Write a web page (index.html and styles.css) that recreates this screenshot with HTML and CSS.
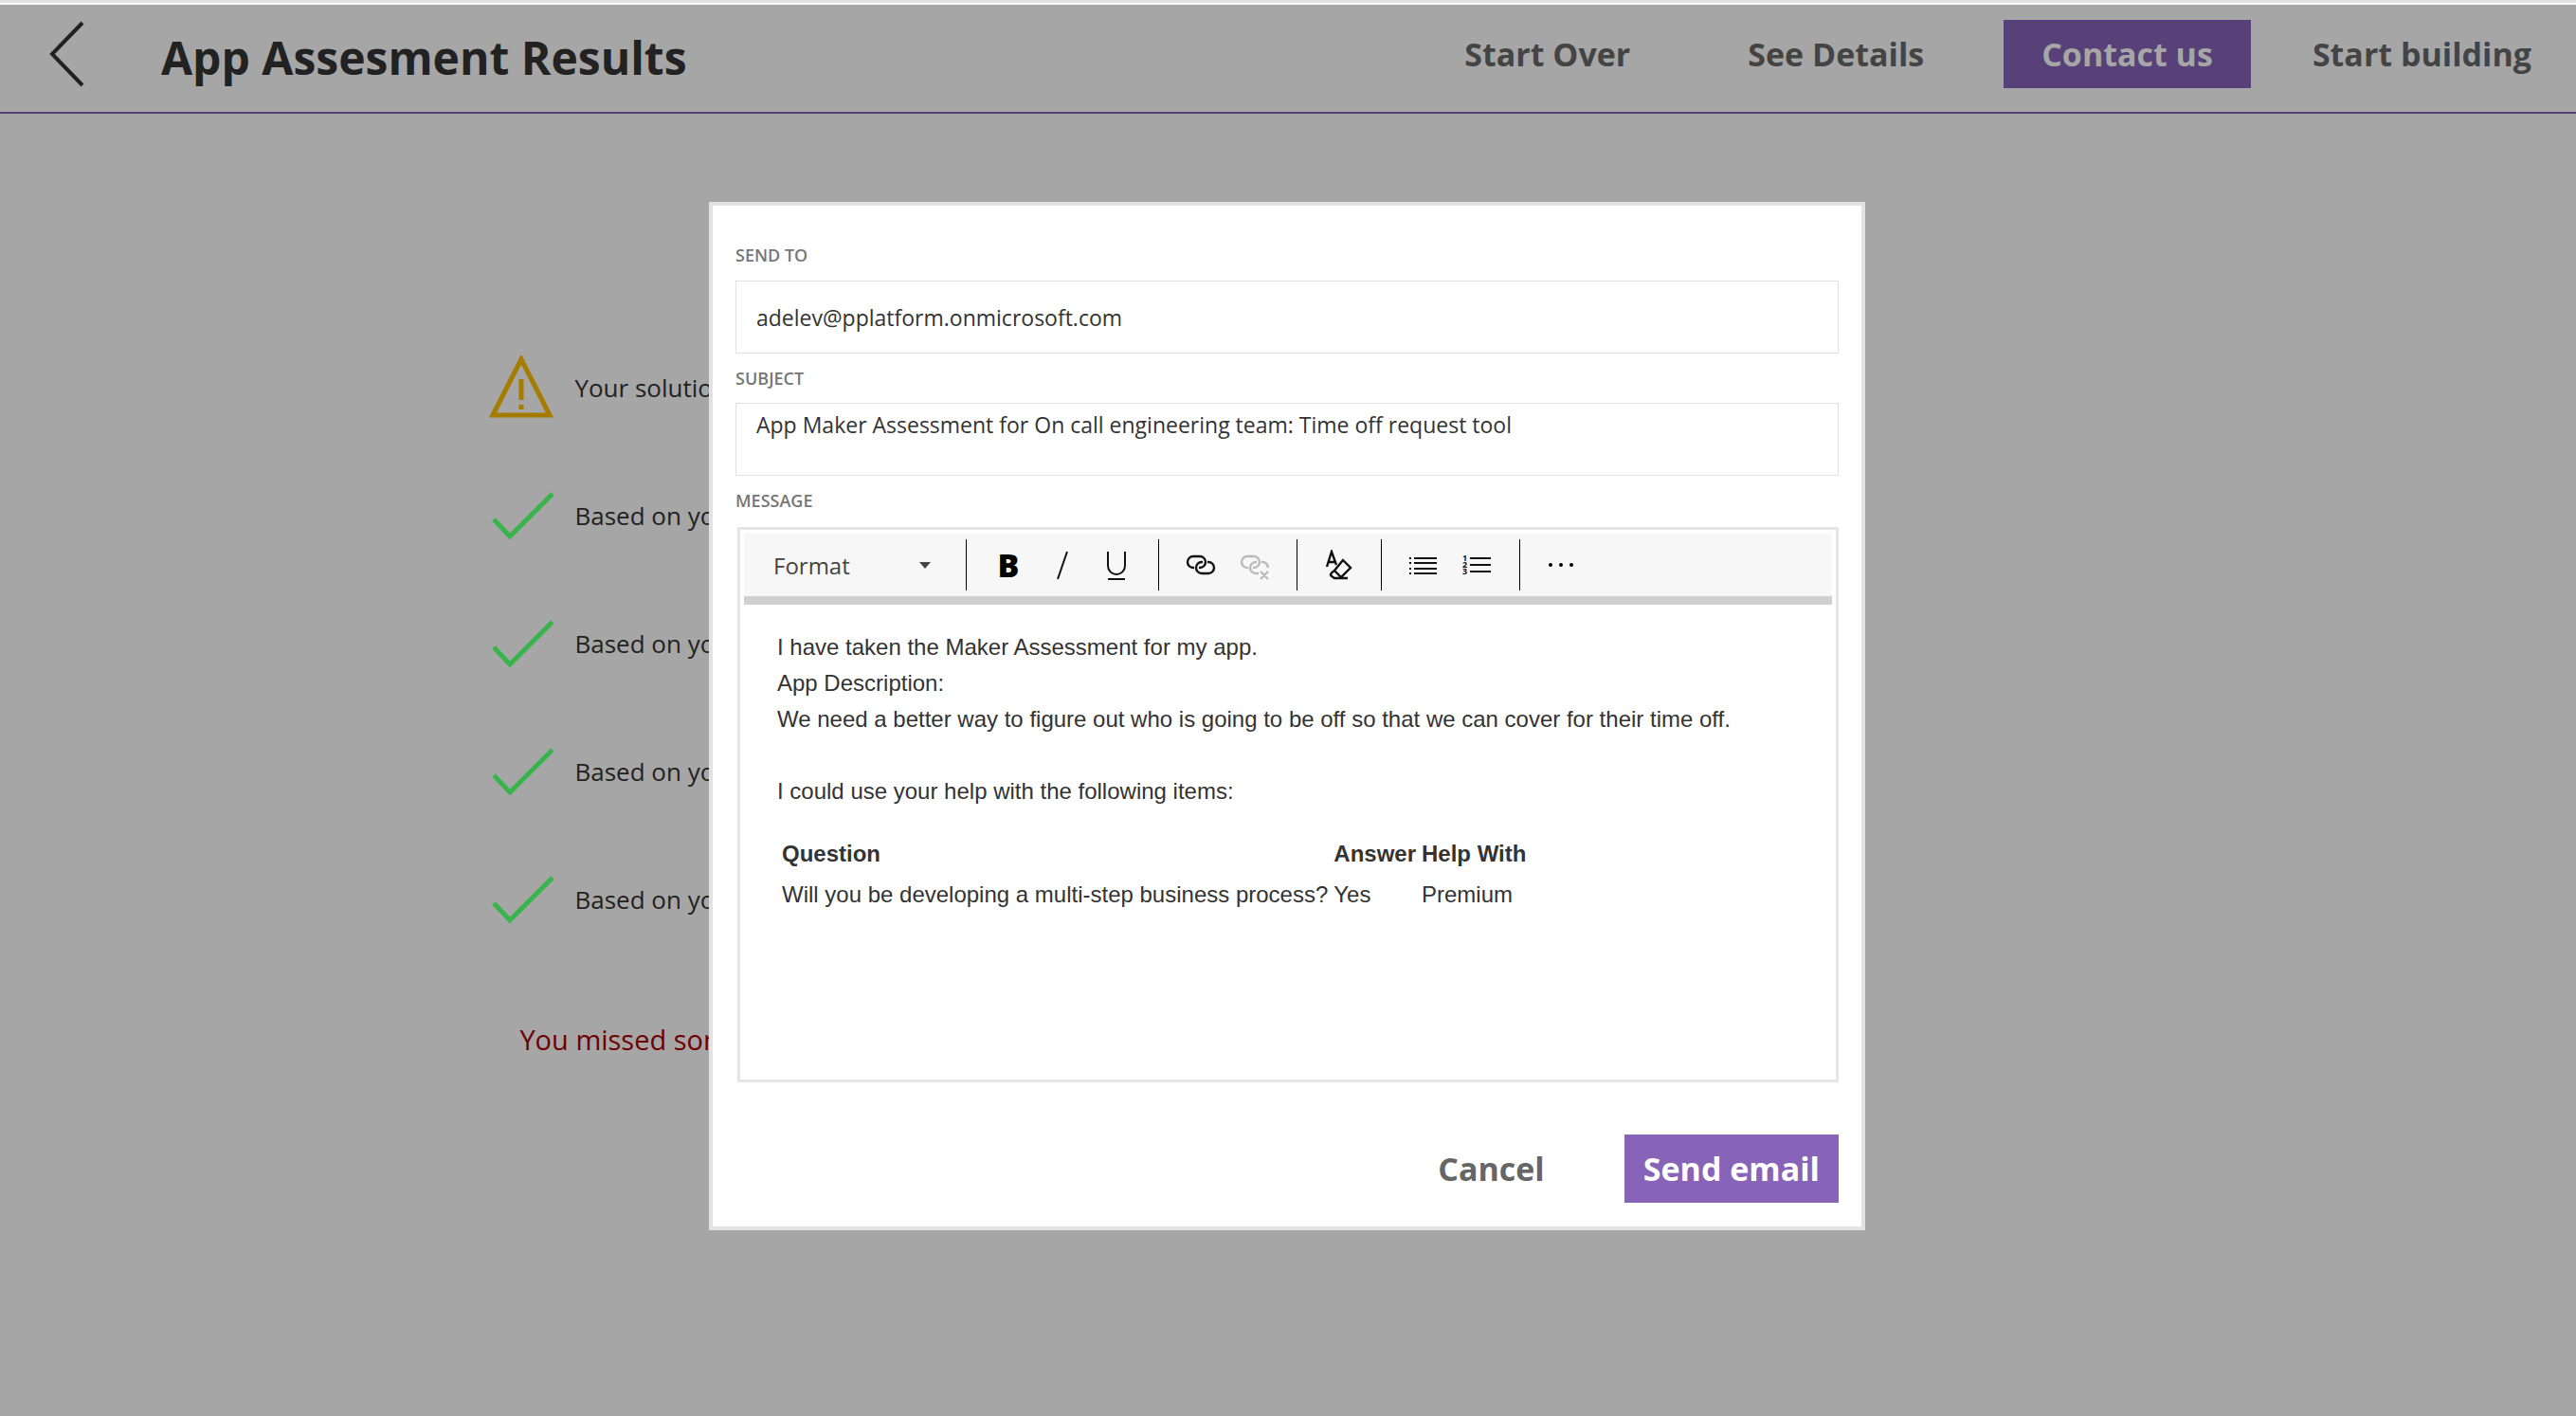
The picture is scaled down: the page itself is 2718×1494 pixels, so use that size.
FILE: index.html
```html
<!DOCTYPE html>
<html lang="en">
<head>
<meta charset="utf-8">
<title>App Assesment Results</title>
<link rel="stylesheet" href="styles.css">
</head>
<body>
<header class="header">
  <button class="back" aria-label="Back">
    <svg width="40" height="70" viewBox="0 0 40 70"><path d="M37 2 5 35 37 68"/></svg>
  </button>
  <h1 class="title">App Assesment Results</h1>
  <nav class="nav">
    <button class="btn">Start Over</button>
    <button class="btn">See Details</button>
    <button class="btn btn-dim">Contact us</button>
    <button class="btn btn-last">Start building</button>
  </nav>
</header>

<main class="main">
  <ul class="results">
    <li class="result">
      <svg class="mark" viewBox="0 0 68 68"><path class="warn" d="M34 4 4 63H64Z"/><path class="warn" d="M34 25V47M34 52V57"/></svg>
      <span>Your solution</span>
    </li>
    <li class="result"><svg class="mark" viewBox="0 0 68 68"><path class="check" d="M5 38 22 56 67 11"/></svg><span>Based on your</span></li>
    <li class="result"><svg class="mark" viewBox="0 0 68 68"><path class="check" d="M5 38 22 56 67 11"/></svg><span>Based on your</span></li>
    <li class="result"><svg class="mark" viewBox="0 0 68 68"><path class="check" d="M5 38 22 56 67 11"/></svg><span>Based on your</span></li>
    <li class="result"><svg class="mark" viewBox="0 0 68 68"><path class="check" d="M5 38 22 56 67 11"/></svg><span>Based on your</span></li>
  </ul>
  <p class="missed">You missed some</p>
</main>

<div class="overlay">
  <form class="dialog" role="dialog" aria-label="Contact us">
    <label class="label" for="to">SEND TO</label>
    <input class="field" id="to" type="text" value="adelev@pplatform.onmicrosoft.com">
    <label class="label" for="subject">SUBJECT</label>
    <textarea class="field field-area" id="subject" spellcheck="false">App Maker Assessment for On call engineering team: Time off request tool</textarea>
    <span class="label" id="message-label">MESSAGE</span>
    <div class="editor">
      <div class="toolbar">
        <button type="button" class="format">Format<svg width="12" height="7" viewBox="0 0 12 7"><path d="M0 0H12L6 7Z"/></svg></button>
        <div class="group">
          <button type="button" class="tool" aria-label="Bold"><b class="bold">B</b></button>
          <button type="button" class="tool" aria-label="Italic"><svg viewBox="0 0 32 32"><path d="M21 2 11 31"/></svg></button>
          <button type="button" class="tool" aria-label="Underline"><svg viewBox="0 0 32 32"><path d="M7 2V17a9 9 0 0 0 18 0V2M7 31H25"/></svg></button>
        </div>
        <div class="group">
          <button type="button" class="tool" aria-label="Link"><svg viewBox="0 0 32 32"><path class="thick" d="M9 19H8a6 6 0 0 1 0-12h7a6 6 0 0 1 0 12h-1M23 13h1a6 6 0 0 1 0 12h-7a6 6 0 0 1 0-12h1"/></svg></button>
          <button type="button" class="tool tool-off" aria-label="Remove link"><svg viewBox="0 0 32 32"><path class="thick" d="M9 19H8a6 6 0 0 1 0-12h7a6 6 0 0 1 0 12h-1M23 13h1q5 0 6 6M20 25h-3a6 6 0 0 1 0-12h1M22 23l8 8M30 23l-8 8"/></svg></button>
        </div>
        <div class="group">
          <button type="button" class="tool" aria-label="Clear formatting"><svg viewBox="0 0 32 32"><path class="thick" d="M3 18 8 2 13 16M5 13H12M20 11 28 19 18 29 11 22ZM11 22Q5 26 8 28L11 30H25M11 22 18 29"/></svg></button>
        </div>
        <div class="group">
          <button type="button" class="tool" aria-label="Bulleted list"><svg viewBox="0 0 32 32"><path d="M6 9H30M6 14H30M6 20H30M6 25H30M1 9H3M1 14H3M1 20H3M1 25H3"/></svg></button>
          <button type="button" class="tool" aria-label="Numbered list"><svg viewBox="0 0 32 32"><path d="M8 9H30M8 16H30M8 23H30"/><g class="digits"><text x="0" y="12">1</text><text x="0" y="19">2</text><text x="0" y="26">3</text></g></svg></button>
        </div>
        <div class="group">
          <button type="button" class="tool" aria-label="More"><svg viewBox="0 0 32 32"><g class="dots"><circle cx="4" cy="16" r="2"/><circle cx="15" cy="16" r="2"/><circle cx="26" cy="16" r="2"/></g></svg></button>
        </div>
      </div>
      <div class="message" contenteditable="true" role="textbox" aria-labelledby="message-label" spellcheck="false">
        <p>I have taken the Maker Assessment for my app.<br>App Description:<br>We need a better way to figure out who is going to be off so that we can cover for their time off.<br><br>I could use your help with the following items:</p>
        <table class="items">
          <tr><th>Question</th><th>Answer</th><th>Help With</th></tr>
          <tr><td>Will you be developing a multi-step business process?</td><td>Yes</td><td>Premium</td></tr>
        </table>
      </div>
    </div>
    <div class="actions">
      <button type="button" class="btn btn-cancel">Cancel</button>
      <button type="submit" class="btn btn-primary">Send email</button>
    </div>
  </form>
</div>
</body>
</html>
```
FILE: styles.css
```css
* { box-sizing: border-box; }
body {
  margin: 0;
  min-height: 100vh;
  background: #a6a6a6;
  border-top: 3px solid #e0e0e0;
  font-family: "Open Sans", "Noto Sans", sans-serif;
  color: #222;
}
button { padding: 0; border: 0; background: none; font: inherit; color: inherit; }
.header {
  display: flex;
  align-items: flex-start;
  height: 117px;
  padding: 16px 0 0 50px;
  border-top: 2px solid #fafafa;
  border-bottom: 2px solid #584178;
}
.back { width: 40px; height: 72px; }
.back svg { display: block; fill: none; stroke: #222; stroke-width: 4; }
.title { flex: 1; margin: 8px 0 0 80px; font-size: 48px; line-height: 64px; }
.nav { display: flex; gap: 44px; }
.btn { height: 72px; padding: 0 40px; font-size: 34px; line-height: 40px; font-weight: 700; color: #444; white-space: nowrap; }
.btn-dim { background: #584178; color: #a6a6a6; }
.btn-last { padding: 0 47px 0 21px; }
.results { margin: 0; padding: 0; list-style: none; }
.main { padding: 249px 0 0 19%; }
.result { display: flex; align-items: center; gap: 22px; height: 80px; margin-bottom: 55px; font-size: 26px; }
.mark { width: 68px; height: 68px; fill: none; stroke-width: 5; }
.warn { stroke: #a67c00; }
.check { stroke: #39b44d; }
.missed { margin: 88px 0 0 32px; font-size: 29px; line-height: 40px; color: #6d0000; }
.overlay { position: fixed; inset: 0; display: flex; justify-content: center; align-items: flex-start; padding: 213px 2px 0 0; }
.dialog {
  display: flex;
  flex-direction: column;
  width: 1220px;
  padding: 40px 24px 25px;
  border: 4px solid #e2e2e2;
  background: #fff;
}
.label { font-size: 18px; line-height: 24px; font-weight: 600; color: #767676; }
.field { height: 77px; margin: 15px 0 14px; padding: 0 21px; border: 1px solid #e1e1e1; background: #fff; font: 23px/32px "Open Sans", "Noto Sans", sans-serif; color: #333; outline: 0; }
.field-area { margin-top: 14px; padding: 6px 21px; resize: none; overflow: hidden; }
.editor { margin: 16px 0 55px 2px; height: 586px; padding: 4px; border: 3px solid #e5e5e5; }
.toolbar { display: flex; align-items: center; height: 75px; background: #f7f7f7; border-bottom: 9px solid #d0d0d0; }
.format { display: flex; align-items: center; justify-content: space-between; width: 234px; padding: 0 37px 0 31px; font-size: 24px; color: #444; }
.format svg { fill: #444; }
.group { display: flex; gap: 25px; height: 54px; align-items: center; padding: 0 28px; border-left: 1px solid #000; }
.tool { width: 32px; height: 32px; color: #111; }
.tool svg { display: block; width: 32px; height: 32px; fill: none; stroke: currentColor; stroke-width: 2; }
.tool .thick { stroke-width: 2.4; }
.tool-off { color: #bbb; }
.tool .dots { fill: #000; stroke: none; }
.digits { fill: #111; stroke: none; font-size: 9px; font-weight: 700; }
.bold { font-size: 34px; line-height: 32px; font-weight: 800; color: #000; }
.message { padding: 26px 35px; font: 24px/38px "Liberation Sans", Arial, sans-serif; color: #333; outline: 0; }
.message p { margin: 0; }
.items { margin-top: 24px; border-spacing: 4px 3px; }
.items td, .items th { padding: 1px; text-align: left; white-space: nowrap; }
.actions { display: flex; justify-content: flex-end; gap: 44px; }
.btn-cancel { color: #666; }
.btn-primary { padding: 0 20px; background: #8864b8; color: #fff; }
```
